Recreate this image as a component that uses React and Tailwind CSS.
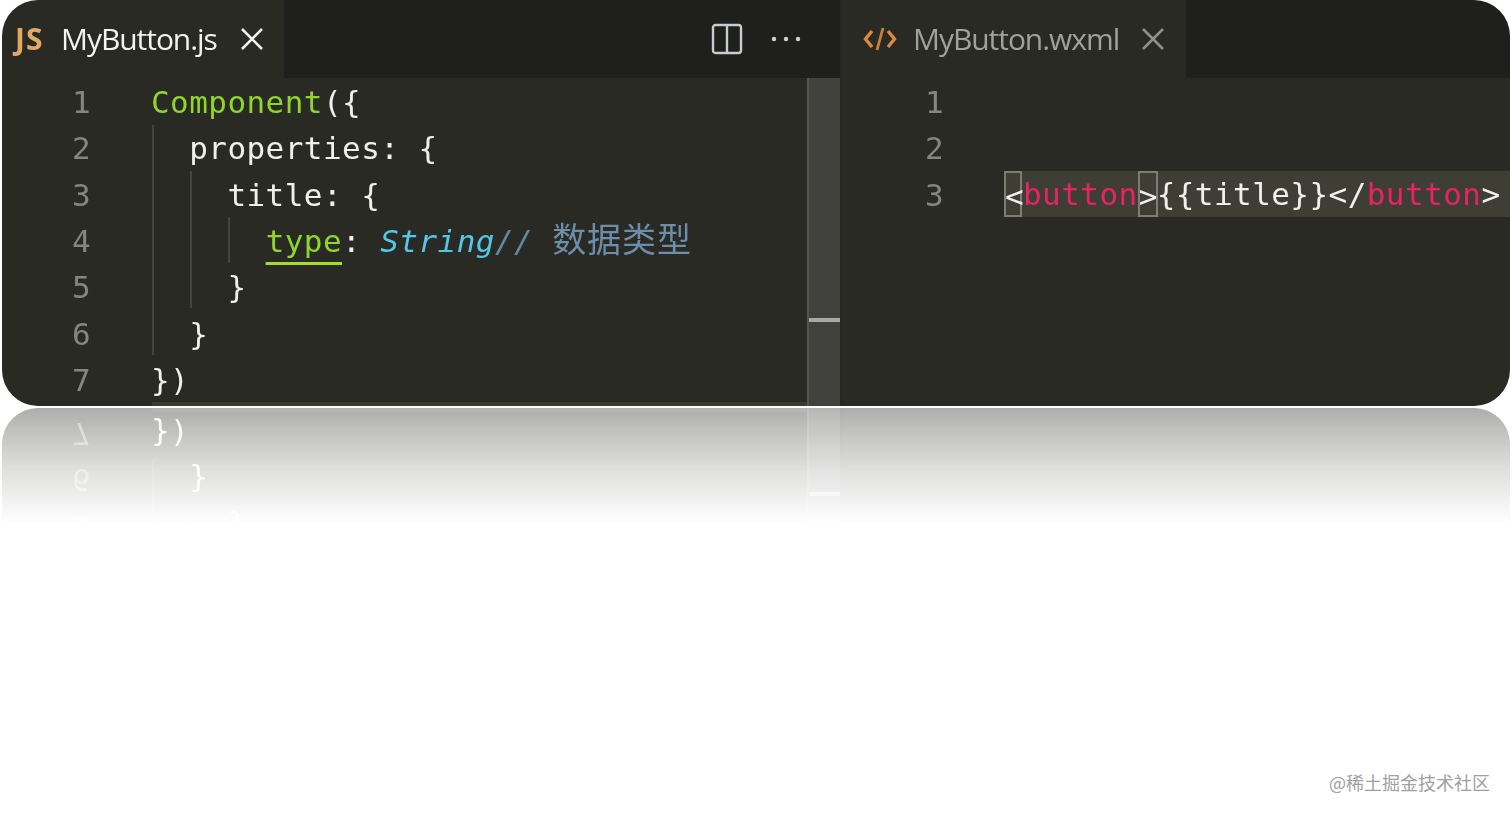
import React from "react";

const CODE_FONT = "font-['DejaVu_Sans_Mono','Liberation_Mono',monospace]";
const UI_FONT = "font-['Open_Sans','Noto_Sans',sans-serif]";

const CloseIcon = ({ color }) => (
  <svg width="24" height="24" viewBox="0 0 24 24" fill="none" stroke={color} strokeWidth="2.6">
    <path d="M2 2 L22 22 M22 2 L2 22" />
  </svg>
);

const SplitIcon = () => (
  <svg width="32" height="32" viewBox="0 0 32 32" fill="none" stroke="#c8ccd0" strokeWidth="2.4">
    <rect x="2" y="2" width="28" height="28" rx="2.5" />
    <path d="M16 2 V30" />
  </svg>
);

const DotsIcon = () => (
  <svg width="30" height="6" viewBox="0 0 30 6" fill="#d0d0d0">
    <circle cx="3" cy="3" r="2.2" />
    <circle cx="15" cy="3" r="2.2" />
    <circle cx="27" cy="3" r="2.2" />
  </svg>
);

const CodeIcon = () => (
  <svg width="34" height="24" viewBox="0 0 34 24" fill="none" stroke="#d98a3d" strokeWidth="3.4">
    <path d="M9 4 L2.5 12 L9 20 M25 4 L31.5 12 L25 20" />
    <path d="M20 1 L14 23" strokeWidth="2.8" stroke="#c9803a" />
  </svg>
);

const Pink = ({ children }) => <span className="text-[#e8245f]">{children}</span>;

const BracketBox = ({ children, width }) => (
  <span className={`inline-block h-[46px] align-top border-2 border-[#7d7d76] ${width}`}>
    {children}
  </span>
);

const leftLines = [
  <span className="text-[#8ed62c]">Component<span className="text-[#f0f0ea]">{"({"}</span></span>,
  <>{"  properties: {"}</>,
  <>{"    title: {"}</>,
  <>
    {"      "}
    <span className="text-[#8ed62c] underline decoration-[#a5dc2a] decoration-[3px] underline-offset-[10px]">type</span>
    {": "}
    <span className="italic text-[#54c6e6]">String</span>
    <span className="italic text-[#5f88a8]">//</span>
    <span className="text-[#5f88a8]">{" "}</span>
    <span className="text-[#6d8ea8] font-['Noto_Sans_CJK_SC',sans-serif] text-[34px] leading-[0] tracking-[0.9px]">数据类型</span>
  </>,
  <>{"    }"}</>,
  <>{"  }"}</>,
  <>{"})"}</>,
];

const rightLines = [
  "",
  "",
  <span className="whitespace-pre">
    <BracketBox width="w-[18px] mr-[1px] -ml-px">
      <span className="-ml-px">{"<"}</span>
    </BracketBox>
    <Pink>button</Pink>
    <BracketBox width="w-[20px] -mr-px">
      <span className="-ml-[1px]">{">"}</span>
    </BracketBox>
    {"{{title}}</"}
    <Pink>button</Pink>
    {">"}
  </span>,
];

const LineNumbers = ({ lines, width }) => (
  <div className={`shrink-0 text-right text-[#86867f] ${width}`}>
    {lines.map((_, i) => (
      <div key={i} className="h-[46.33px]">
        {i + 1}
      </div>
    ))}
  </div>
);

function LeftPane() {
  return (
    <div className="flex flex-col w-[838px] shrink-0">
      <div className="flex h-[78px] bg-[#1f1f1d]">
        <div className={`flex items-center w-[282px] bg-[#2a2a24] pl-[13px] ${UI_FONT}`}>
          <span className="text-[30px] font-bold text-[#e0a965] tracking-[1px] w-[46px]">JS</span>
          <span className="text-[30px] text-[#f2f2f2] tracking-[-1.05px] w-[179px]">MyButton.js</span>
          <CloseIcon color="#f0f0f0" />
        </div>
        <div className="flex flex-1 items-center pl-[427px] gap-[28px]">
          <SplitIcon />
          <DotsIcon />
        </div>
      </div>
      <div className="relative flex flex-1 bg-[#2a2a24] pt-px">
        <LineNumbers lines={leftLines} width="w-[89px]" />
        <div className="ml-[60px] flex-1 whitespace-pre text-[#f0f0ea]">
          {leftLines.map((line, i) => (
            <div key={i} className="h-[46.33px]">
              {line}
            </div>
          ))}
        </div>
        <div className="absolute left-[150px] top-[47px] h-[230px] w-[2px] bg-[#45453f]" />
        <div className="absolute left-[188px] top-[93px] h-[137px] w-[2px] bg-[#45453f]" />
        <div className="absolute left-[226px] top-[139px] h-[46px] w-[2px] bg-[#45453f]" />
        <div className="absolute left-[150px] right-[33px] bottom-0 h-[4px] bg-[#3a3a30]" />
        <div className="absolute right-0 top-0 bottom-0 w-[33px] bg-[#41413e] border-l-2 border-[#55554f]">
          <div className="mt-[240px] h-[4px] bg-[#a9a9a4]" />
        </div>
      </div>
    </div>
  );
}

function RightPane() {
  return (
    <div className="flex flex-col flex-1 border-l-2 border-[#262622]">
      <div className="flex h-[78px] bg-[#1f1f1d]">
        <div className={`flex items-center w-[344px] bg-[#2a2a24] pl-[21px] ${UI_FONT}`}>
          <CodeIcon />
          <span className="ml-[16px] text-[30px] text-[#a0a09c] tracking-[-1.05px] w-[228px]">MyButton.wxml</span>
          <CloseIcon color="#8f8f8b" />
        </div>
      </div>
      <div className="flex flex-1 bg-[#2a2a24] pt-px">
        <LineNumbers lines={rightLines} width="w-[102px]" />
        <div className="ml-[61px] flex-1 text-[#f0f0ea]">
          {rightLines.map((line, i) => (
            <div key={i} className={`h-[46.33px] ${i === 2 ? "-mt-px bg-[#3e3e35]" : ""}`}>
              {line}
            </div>
          ))}
        </div>
      </div>
    </div>
  );
}

const Editor = () => (
  <div className={`flex h-[406px] w-full overflow-hidden text-[31px] leading-[46.33px] tracking-[0.44px] [filter:blur(0.35px)] ${CODE_FONT}`}>
    <LeftPane />
    <RightPane />
  </div>
);

export default function App() {
  return (
    <div className="relative h-[816px] w-[1512px] overflow-hidden bg-white">
      <div className="mx-[2px] h-[406px] overflow-hidden rounded-[36px]">
        <Editor />
      </div>
      <div className="mx-[2px] mt-[2px] h-[116px] overflow-hidden [mask-image:linear-gradient(to_bottom,rgba(0,0,0,0.38),rgba(0,0,0,0.14)_55%,transparent)]">
        <div className="-scale-y-100 h-[406px] overflow-hidden rounded-[36px]">
          <Editor />
        </div>
      </div>
      <div className="mt-[246px] pr-[22px] text-right text-[18px] leading-6 text-[#a0a0a0] font-['Noto_Sans_CJK_SC','Liberation_Sans',sans-serif]">
        @稀土掘金技术社区
      </div>
    </div>
  );
}
